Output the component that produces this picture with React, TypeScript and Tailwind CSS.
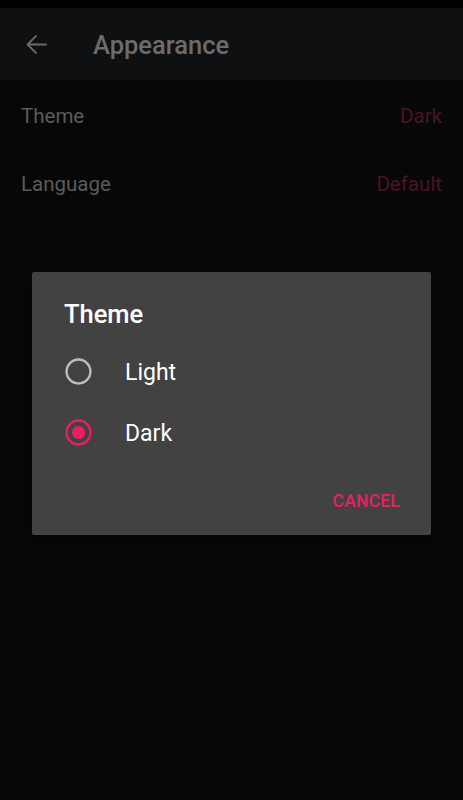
import React from "react";

export default function App() {
  return (
    <div
      className="relative w-[463px] h-[800px] bg-[#070707] overflow-hidden"
      style={{ fontFamily: "Roboto, 'Noto Sans', sans-serif" }}
    >
      <div className="h-[8px] bg-black" />
      <div className="h-[72px] bg-[#0f1012] flex items-center">
        <div className="w-[73px] flex justify-center">
          <svg width="31" height="31" viewBox="0 0 24 24">
            <path
              d="M20 11.25H6.9l5.6-5.6L11.45 4.6 4.05 12l7.4 7.4 1.05-1.05-5.6-5.6H20v-1.5z"
              fill="#6b6b6b"
            />
          </svg>
        </div>
        <div className="ml-[20px] text-[25.5px] leading-[30px] font-medium text-[#6c6c6c] mt-[2px]">
          Appearance
        </div>
      </div>
      <div className="h-[69px] flex items-center justify-between px-[21px] pt-[4px]">
        <span className="text-[20.5px] text-[#5b5b5b]">Theme</span>
        <span className="text-[20.5px] text-[#4a1327]">Dark</span>
      </div>
      <div className="h-[69px] flex items-center justify-between px-[21px] pt-[2px]">
        <span className="text-[20.5px] text-[#5b5b5b]">Language</span>
        <span className="text-[20.5px] text-[#4a1327]">Default</span>
      </div>

      <div className="absolute left-[32px] top-[272px] w-[399px] h-[263px] bg-[#424242] rounded-[2px] shadow-lg flex flex-col">
        <div className="pt-[27px] pl-[32px] h-[56px] text-[25.5px] leading-[30px] font-medium text-white">
          Theme
        </div>
        <div className="mt-[13px] h-[61px] flex items-center">
          <div className="w-[93px] flex items-center pl-[33px]">
            <svg width="27" height="27" viewBox="0 0 26 26">
              <circle cx="13" cy="13" r="11.5" fill="none" stroke="#bdbdbd" strokeWidth="2.3" />
            </svg>
          </div>
          <span className="text-[23px] text-white pt-[4px]">Light</span>
        </div>
        <div className="h-[61px] flex items-center">
          <div className="w-[93px] flex items-center pl-[33px]">
            <svg width="27" height="27" viewBox="0 0 26 26">
              <circle cx="13" cy="13" r="11.5" fill="none" stroke="#e91e63" strokeWidth="2.3" />
              <circle cx="13" cy="13" r="6.3" fill="#e91e63" />
            </svg>
          </div>
          <span className="text-[23px] text-white pt-[4px]">Dark</span>
        </div>
        <div className="flex-1 flex items-center justify-end pr-[31px] pt-[4px]">
          <span className="text-[17.5px] font-medium text-[#e91e63] tracking-[0.2px]">CANCEL</span>
        </div>
      </div>
    </div>
  );
}
